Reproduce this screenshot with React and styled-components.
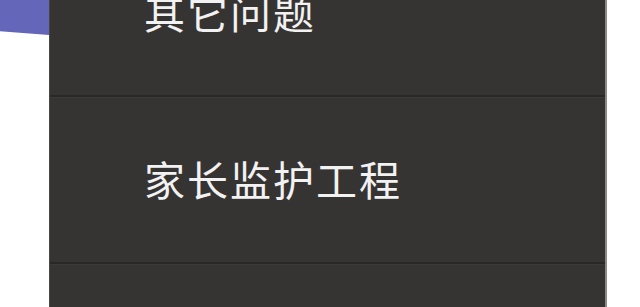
import React from "react";
import styled, { createGlobalStyle } from "styled-components";

const GlobalStyle = createGlobalStyle`
  html, body {
    margin: 0;
    padding: 0;
    background: #ffffff;
    overflow: hidden;
  }
`;

const items = ["其它问题", "家长监护工程"];

const App = () => {
  return (
    <>
      <GlobalStyle />
      <Page>
        <Side>
          <Banner />
        </Side>
        <Menu>
          <List>
            {items.map((label) => (
              <Row key={label}>
                <Label>{label}</Label>
              </Row>
            ))}
          </List>
        </Menu>
        <Gutter />
      </Page>
    </>
  );
};

export default App;

const Page = styled.div`
  display: flex;
  width: 640px;
  height: 307px;
  overflow: hidden;
  font-family: "Noto Sans CJK SC", "Noto Sans", sans-serif;
`;

const Side = styled.div`
  width: 49px;
  flex-shrink: 0;
  background: #ffffff;
`;

const Banner = styled.div`
  height: 35px;
  background: #6466b9;
  clip-path: polygon(0 0, 100% 0, 100% 100%, 0 89%);
`;

const Menu = styled.div`
  width: 555px;
  flex-shrink: 0;
  height: 307px;
  overflow: hidden;
  background: #363432;
  border-left: 1px solid #4a4846;
  border-right: 2px solid #8c8a88;
`;

const List = styled.ul`
  list-style: none;
  margin: -70px 0 0;
  padding: 0;
`;

const Row = styled.li`
  display: flex;
  align-items: center;
  box-sizing: border-box;
  height: 167px;
  padding-left: 94px;
  padding-bottom: 2px;
  border-bottom: 2px solid #2a2826;
  box-shadow: 0 1px 0 #3c3a38;
`;

const Label = styled.span`
  font-size: 41px;
  letter-spacing: 2px;
  color: #f2f2f2;
  line-height: 1;
`;

const Gutter = styled.div`
  flex: 1;
  background: #ffffff;
`;
